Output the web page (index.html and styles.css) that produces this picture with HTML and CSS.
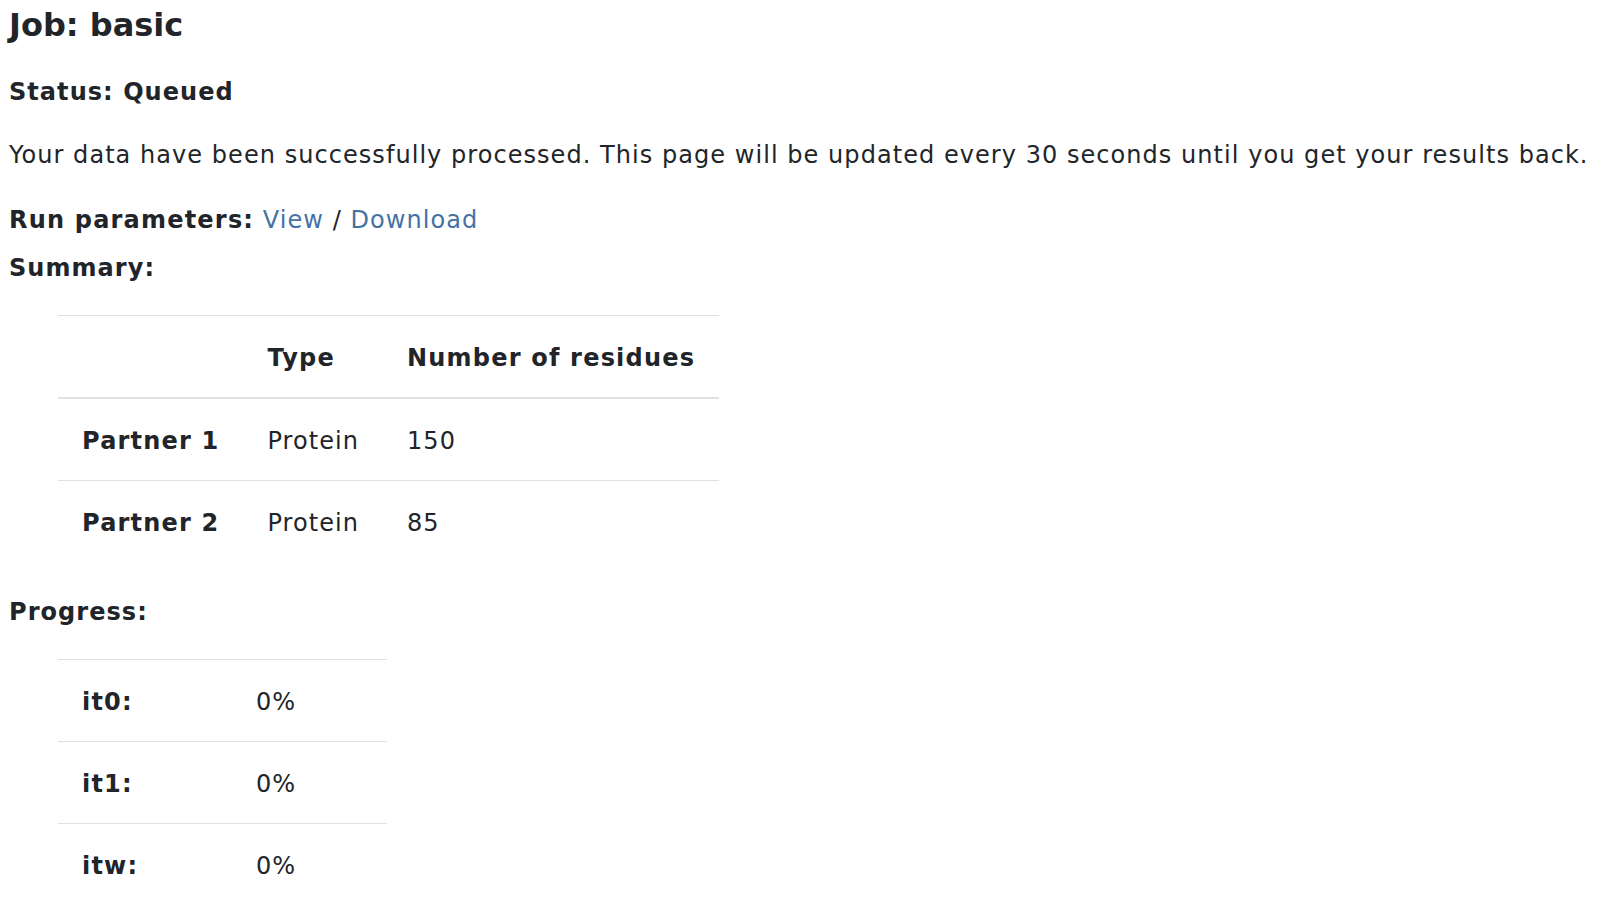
FILE: index.html
```html
<!DOCTYPE html>
<html>
<head>
<meta charset="utf-8">
<link rel="stylesheet" href="styles.css">
</head>
<body>
<main class="page">
  <h1 class="job-title">Job: basic</h1>
  <h2 class="status">Status: Queued</h2>
  <p class="message">Your data have been successfully processed. This page will be updated every 30 seconds until you get your results back.</p>
  <div class="run-params"><strong>Run parameters:</strong> <a href="#">View</a> / <a href="#">Download</a></div>
  <div class="section-label">Summary:</div>
  <table class="data-table summary-table">
    <thead>
      <tr><th></th><th>Type</th><th>Number of residues</th></tr>
    </thead>
    <tbody>
      <tr><th>Partner 1</th><td>Protein</td><td>150</td></tr>
      <tr><th>Partner 2</th><td>Protein</td><td>85</td></tr>
    </tbody>
  </table>
  <div class="section-label progress-label">Progress:</div>
  <table class="data-table progress-table">
    <tbody>
      <tr><th class="col-name">it0:</th><td class="col-value">0%</td></tr>
      <tr><th class="col-name">it1:</th><td class="col-value">0%</td></tr>
      <tr><th class="col-name">itw:</th><td class="col-value">0%</td></tr>
    </tbody>
  </table>
</main>
</body>
</html>
```
FILE: styles.css
```css
html, body {
  margin: 0;
  padding: 0;
  background: #ffffff;
}
body {
  font-family: "DejaVu Sans", Verdana, sans-serif;
  color: #212529;
  font-size: 24px;
  line-height: 36px;
  letter-spacing: 1.05px;
}
.page {
  padding: 5px 8px 0 9px;
}
.job-title {
  margin: 0;
  font-size: 32px;
  line-height: 40px;
  font-weight: bold;
  letter-spacing: 0;
}
.status {
  margin: 29px 0 0;
  font-size: 24px;
  line-height: 36px;
  font-weight: bold;
}
.message {
  margin: 27px 0 0;
  white-space: nowrap;
}
.run-params {
  margin-top: 29px;
}
.run-params strong {
  font-weight: bold;
  letter-spacing: 1.2px;
}
.run-params a {
  color: #4472a6;
  text-decoration: none;
}
.section-label {
  margin-top: 12px;
  font-weight: bold;
}
.progress-label {
  margin-top: 32px;
}
.data-table {
  border-collapse: collapse;
  margin: 29px 0 0 49px;
}
.data-table th,
.data-table td {
  text-align: left;
  padding: 26px 24px 22px;
  line-height: 33px;
  border-top: 1px solid #dee2e6;
  vertical-align: top;
}
.data-table th {
  font-weight: bold;
  letter-spacing: 1.2px;
}
.data-table td {
  font-weight: normal;
}
.summary-table thead th {
  border-bottom: 2px solid #dee2e6;
}
.progress-table {
  margin-top: 29px;
}
.progress-table .col-name {
  width: 126px;
}
.progress-table .col-value {
  width: 107px;
}
```
